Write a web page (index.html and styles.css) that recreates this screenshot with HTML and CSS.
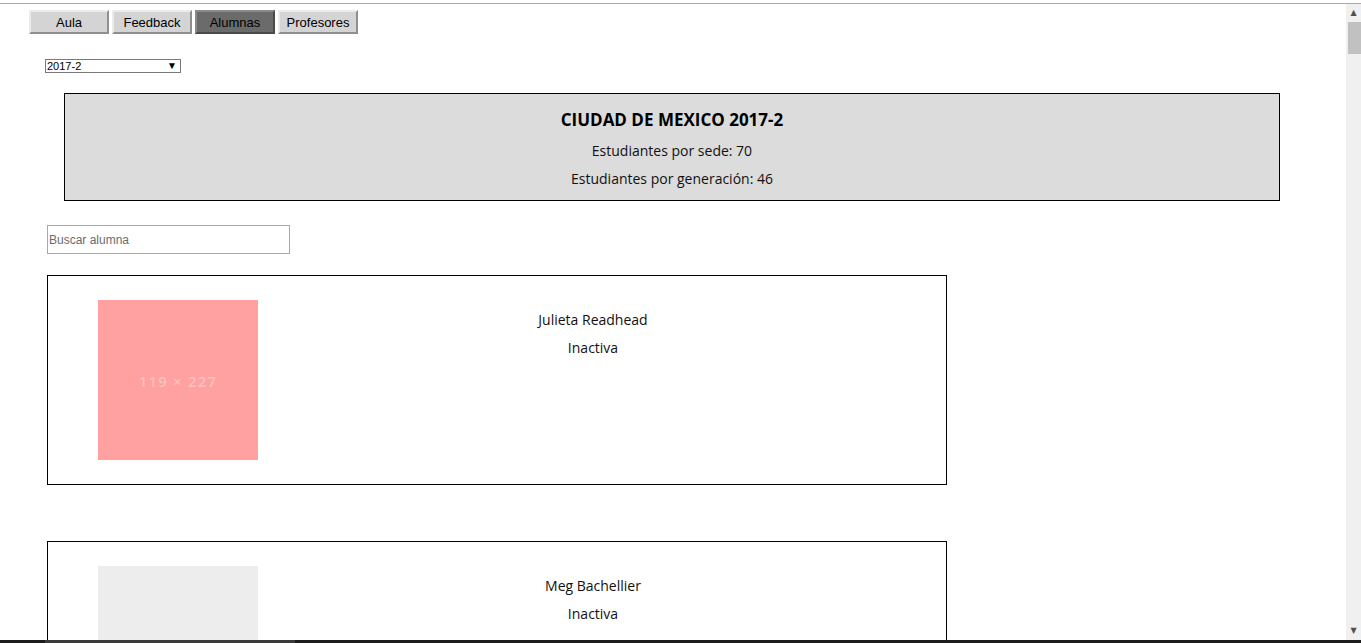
FILE: index.html
```html
<!DOCTYPE html>
<html lang="es">
<head>
<meta charset="utf-8">
<title>Alumnas</title>
<link rel="stylesheet" href="styles.css">
</head>
<body>
<div class="window">
  <div class="chrome-top"></div>
  <div class="viewport">
    <div class="page">
      <nav class="tabs">
        <button class="tab">Aula</button>
        <button class="tab">Feedback</button>
        <button class="tab active">Alumnas</button>
        <button class="tab">Profesores</button>
      </nav>
      <div class="select"><span>2017-2</span><span class="arrow">▼</span></div>
      <section class="summary">
        <h1 class="summary-title">CIUDAD DE MEXICO 2017-2</h1>
        <p class="summary-line">Estudiantes por sede: 70</p>
        <p class="summary-line">Estudiantes por generación: 46</p>
      </section>
      <input class="search" type="text" placeholder="Buscar alumna">
      <div class="cards">
        <article class="card">
          <div class="photo photo-pink"><span>119 × 227</span></div>
          <div class="info">
            <p class="name">Julieta Readhead</p>
            <p class="status">Inactiva</p>
          </div>
        </article>
        <article class="card">
          <div class="photo photo-gray"><span>244 × 165</span></div>
          <div class="info">
            <p class="name">Meg Bachellier</p>
            <p class="status">Inactiva</p>
          </div>
        </article>
      </div>
    </div>
    <div class="scrollbar">
      <div class="sb-arrow">▲</div>
      <div class="sb-thumb"></div>
      <div class="sb-track"></div>
      <div class="sb-arrow">▼</div>
    </div>
  </div>
  <div class="taskbar"><div class="task-seg"></div></div>
</div>
</body>
</html>
```
FILE: styles.css
```css
html, body {
  margin: 0;
  padding: 0;
  background: #fff;
}
.window {
  width: 1361px;
  height: 643px;
  display: flex;
  flex-direction: column;
  overflow: hidden;
}
.chrome-top {
  height: 3px;
  border-bottom: 1px solid #a9a9a9;
  background: #fff;
  flex: none;
}
.viewport {
  flex: 1;
  display: flex;
  min-height: 0;
}
.page {
  flex: 1;
  overflow: hidden;
  font-family: "Open Sans", "DejaVu Sans", sans-serif;
  color: #111;
}
.tabs {
  display: flex;
  gap: 3px;
  padding: 6px 0 0 29px;
}
.tab {
  width: 80px;
  height: 24px;
  margin: 0;
  padding: 0;
  font-family: "Liberation Sans", Arial, sans-serif;
  font-size: 13px;
  color: #000;
  background: #d4d4d4;
  border: 2px solid;
  border-color: #ebebeb #8f8f8f #8f8f8f #ebebeb;
}
.tab.active {
  background: #6b6b6b;
  border-color: #8a8a8a #4a4a4a #4a4a4a #8a8a8a;
}
.select {
  margin: 25px 0 0 45px;
  width: 133px;
  height: 12px;
  border: 1px solid #7a7a7a;
  display: flex;
  justify-content: space-between;
  align-items: center;
  font-family: "Liberation Sans", Arial, sans-serif;
  font-size: 11px;
  line-height: 12px;
  color: #000;
  padding-left: 1px;
  box-sizing: content-box;
}
.select .arrow {
  font-size: 10px;
  margin-right: 3px;
}
.summary {
  margin: 20px 0 0 64px;
  width: 1214px;
  height: 106px;
  border: 1px solid #000;
  background: #dcdcdc;
  text-align: center;
}
.summary-title {
  margin: 14px 0 0;
  font-size: 17px;
  line-height: 24px;
  font-weight: 700;
  color: #000;
}
.summary-line {
  margin: 0;
  font-size: 14px;
  line-height: 28px;
}
.summary-title + .summary-line {
  margin-top: 5px;
}
.search {
  display: block;
  margin: 24px 0 0 47px;
  width: 243px;
  height: 29px;
  box-sizing: border-box;
  border: 1px solid #a9a9a9;
  padding: 0 1px;
  font-family: "Liberation Sans", Arial, sans-serif;
  font-size: 12px;
  outline: none;
}
.search::placeholder {
  color: #6b6b6b;
}
.cards {
  margin: 21px 0 0 47px;
  display: flex;
  flex-direction: column;
  gap: 56px;
}
.card {
  width: 900px;
  height: 210px;
  box-sizing: border-box;
  border: 1px solid #000;
  display: flex;
  padding: 24px 18px 0 50px;
}
.photo {
  width: 160px;
  height: 160px;
  flex: none;
  display: flex;
  align-items: center;
  justify-content: center;
  font-size: 15px;
  font-weight: 600;
  letter-spacing: 1.2px;
  padding-top: 2px;
  box-sizing: border-box;
}
.photo-pink {
  background: #ffa1a1;
  color: #ffc0c0;
}
.photo-gray {
  background: #ededed;
  color: #c8c8c8;
}
.info {
  flex: 1;
  text-align: center;
  padding-top: 6px;
}
.info p {
  margin: 0;
  font-size: 14px;
  line-height: 28px;
}
.scrollbar {
  width: 15px;
  flex: none;
  background: #f0f0f0;
  display: flex;
  flex-direction: column;
  align-items: center;
}
.sb-arrow {
  height: 18px;
  font-size: 8px;
  line-height: 18px;
  color: #505050;
  font-family: "DejaVu Sans", sans-serif;
}
.sb-thumb {
  width: 13px;
  margin-left: 2px;
  height: 32px;
  background: #c1c1c1;
}
.sb-track {
  flex: 1;
}
.taskbar {
  height: 3px;
  background: #1c1c1c;
  flex: none;
}
.task-seg {
  margin-left: 45px;
  width: 250px;
  height: 3px;
  background: #3a3a3a;
}
```
